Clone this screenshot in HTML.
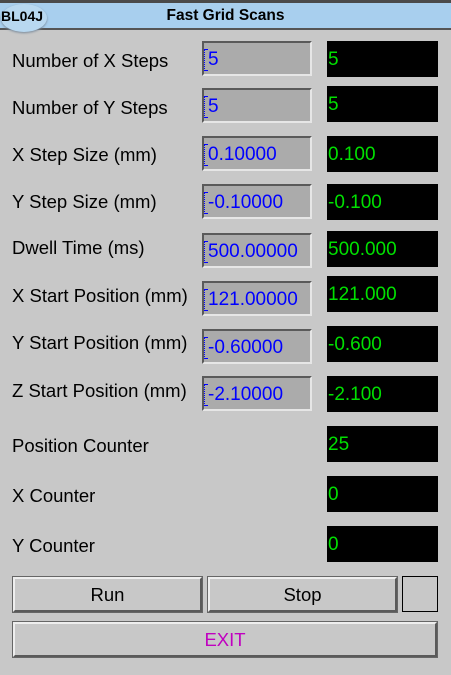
<!DOCTYPE html><html><head><style>
body{margin:0;width:451px;height:675px;background:#c8c8c8;position:relative;overflow:hidden;font-family:"Liberation Sans",sans-serif}
.top{position:absolute;left:0;top:0;width:451px;height:3px;background:#4a4a4a}
.bar{position:absolute;left:0;top:3px;width:451px;height:25px;background:#a8cfee;border-bottom:2px solid #555}
.bar .t{position:absolute;left:0;width:451px;text-align:center;top:4px;font-weight:bold;font-size:15.5px}
.ov{position:absolute;left:1px;top:4px;width:46px;height:28px;border-radius:50%;background:#b8d8f0;box-shadow:0 1px 2px #789}
.ov span{position:absolute;left:0;top:4px;font-weight:bold;font-size:14px}
.l{position:absolute;left:12px;font-size:18.5px;color:#000}
.in{position:absolute;left:202px;height:31px;background:#ababab;border-top:2px solid #5a5a5a;border-left:2px solid #5a5a5a;border-right:2px solid #e6e6e6;border-bottom:2px solid #e6e6e6;color:#0000ff;font-size:19px;line-height:33px;padding-left:4px;box-sizing:content-box;width:102px}
.in:before{content:"";position:absolute;left:0px;top:6px;width:3px;height:20px;border-left:1px dotted #00f;border-top:1px solid #00f;border-bottom:1px solid #00f}
.o{position:absolute;left:327px;width:111px;height:36px;background:#000;color:#00e000;font-size:19px;line-height:38px;padding-left:1px;box-sizing:border-box}
.b{position:absolute;height:35px;box-sizing:border-box;border:2px solid;border-color:#eee #5a5a5a #5a5a5a #eee;text-align:center;line-height:31px;font-size:18.5px;outline:1px solid #666}
</style></head><body>
<div class="top"></div>
<div class="bar"><div class="t">Fast Grid Scans</div></div>
<div class="ov"><span>BL04J</span></div>

<div class="l" style="top:50px">Number of X Steps</div><div class="in" style="top:41px">5</div><div class="o" style="top:41px">5</div>
<div class="l" style="top:97px">Number of Y Steps</div><div class="in" style="top:88px">5</div><div class="o" style="top:86px">5</div>
<div class="l" style="top:144px">X Step Size (mm)</div><div class="in" style="top:136px">0.10000</div><div class="o" style="top:136px">0.100</div>
<div class="l" style="top:191px">Y Step Size (mm)</div><div class="in" style="top:184px">-0.10000</div><div class="o" style="top:184px">-0.100</div>
<div class="l" style="top:237px">Dwell Time (ms)</div><div class="in" style="top:233px">500.00000</div><div class="o" style="top:231px">500.000</div>
<div class="l" style="top:285px">X Start Position (mm)</div><div class="in" style="top:281px">121.00000</div><div class="o" style="top:276px">121.000</div>
<div class="l" style="top:332px">Y Start Position (mm)</div><div class="in" style="top:329px">-0.60000</div><div class="o" style="top:326px">-0.600</div>
<div class="l" style="top:380px">Z Start Position (mm)</div><div class="in" style="top:376px">-2.10000</div><div class="o" style="top:376px">-2.100</div>
<div class="l" style="top:435px">Position Counter</div><div class="o" style="top:426px">25</div>
<div class="l" style="top:485px">X Counter</div><div class="o" style="top:476px">0</div>
<div class="l" style="top:535px">Y Counter</div><div class="o" style="top:526px">0</div>

<div class="b" style="left:13px;top:577px;width:189px">Run</div>
<div class="b" style="left:208px;top:577px;width:189px">Stop</div>
<div style="position:absolute;left:402px;top:576px;width:36px;height:36px;box-sizing:border-box;border:1px solid #000"></div>
<div class="b" style="left:13px;top:622px;width:424px;color:#c000c0">EXIT</div>
</body></html>
